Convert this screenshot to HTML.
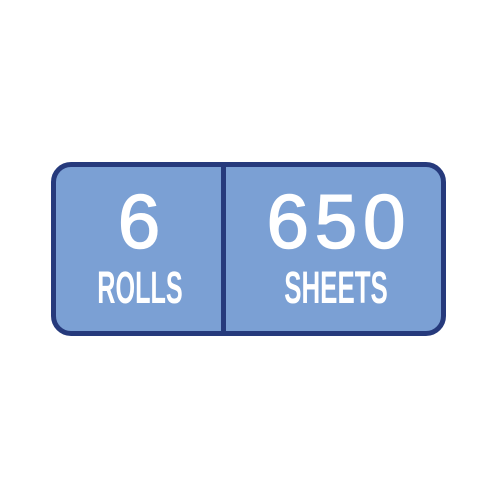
<!DOCTYPE html>
<html><head><style>
html,body{margin:0;padding:0;background:#fff;}
body{width:498px;height:498px;position:relative;overflow:hidden;font-family:"Liberation Sans",sans-serif;}
.box{position:absolute;left:51px;top:162px;width:385px;height:164px;border:5px solid #263a7c;border-radius:20px;background:#7ba0d4;}
.div{position:absolute;left:221px;top:165px;width:5px;height:166px;background:#263a7c;}
.t{position:absolute;color:#fff;white-space:nowrap;line-height:1;}
.num{font-size:76px;font-weight:normal;top:185px;transform:translateX(-50%);-webkit-text-stroke:1.6px #fff;}
.lab{font-size:45px;font-weight:bold;top:265px;}
</style></head><body>
<div class="box"></div>
<div class="div"></div>
<div class="t num" style="left:139px;">6</div>
<div class="t num" style="left:336px;letter-spacing:6px;padding-left:6px;">650</div>
<div class="t lab" style="left:140px;transform:translateX(-50%) scaleX(0.56);">ROLLS</div>
<div class="t lab" style="left:336px;transform:translateX(-50%) scaleX(0.575);">SHEETS</div>
</body></html>
